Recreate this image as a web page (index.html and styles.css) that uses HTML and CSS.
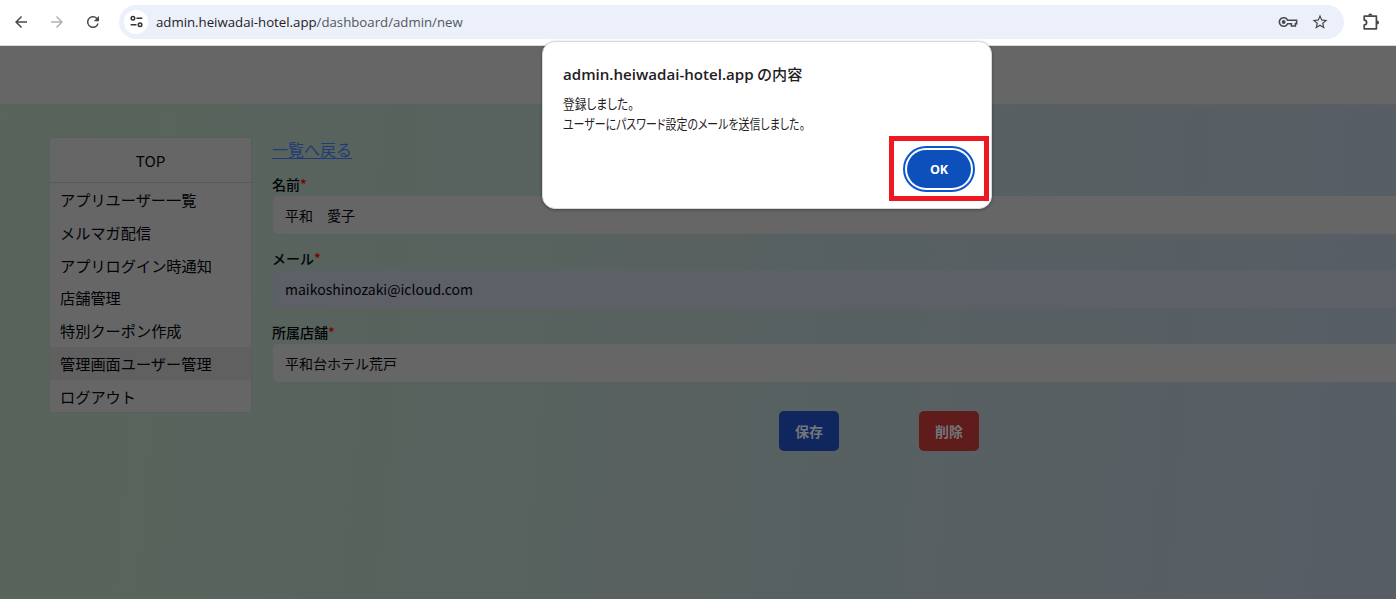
FILE: index.html
```html
<!DOCTYPE html>
<html lang="ja">
<head>
<meta charset="utf-8">
<title>管理画面ユーザー管理</title>
<link rel="stylesheet" href="styles.css">
</head>
<body>
<div class="window">
  <header class="toolbar">
    <svg class="nav-icon" viewBox="0 0 24 24"><path d="M20 11H7.8l5.6-5.6L12 4l-8 8 8 8 1.4-1.4L7.8 13H20z"/></svg>
    <svg class="nav-icon disabled" viewBox="0 0 24 24"><path d="M4 11h12.2l-5.6-5.6L12 4l8 8-8 8-1.4-1.4 5.6-5.6H4z"/></svg>
    <svg class="nav-icon" viewBox="0 0 24 24"><path d="M17.65 6.35A8 8 0 1 0 19.73 14h-2.08A6 6 0 1 1 12 6c1.66 0 3.14.69 4.22 1.78L13 11h7V4z"/></svg>
    <div class="address">
      <span class="site-info">
        <svg viewBox="0 0 16 16"><g fill="none" stroke="#303236" stroke-width="1.6"><circle cx="4.2" cy="4.6" r="1.9"/><path d="M8 4.6h6.2M1.8 11.4H8"/><circle cx="11.8" cy="11.4" r="1.9"/></g></svg>
      </span>
      <span class="url">admin.heiwadai-hotel.app<span class="path">/dashboard/admin/new</span></span>
      <svg class="key-icon" viewBox="0 0 20 12"><g fill="none" stroke="#47494d" stroke-width="1.6"><path d="M9.6 4.3A4.3 4.3 0 1 0 9.6 7.7H13.4V10h4V7.7h1.2V4.3z"/></g><circle cx="5.7" cy="6" r="1.9" fill="#47494d"/></svg>
      <svg class="star-icon" viewBox="0 0 24 24"><path d="M22 9.24l-7.19-.62L12 2 9.19 8.63 2 9.24l5.46 4.73L5.82 21 12 17.27 18.18 21l-1.63-7.03zM12 15.4l-3.76 2.27 1-4.28-3.32-2.88 4.38-.38L12 6.1l1.71 4.04 4.38.38-3.32 2.88 1 4.28z"/></svg>
    </div>
    <svg class="extension-icon" viewBox="0 0 18 18"><path d="M2.2 3.2h12.2v12.6H2.2v-3.9a2.4 2.4 0 0 0 0-4.8z" fill="none" stroke="#47494d" stroke-width="1.7" stroke-linejoin="round"/><path d="M6.2 2.6a2.1 2.1 0 0 1 4.2 0zM15 7.4a2.1 2.1 0 0 1 0 4.2z" fill="#47494d"/></svg>
  </header>
  <div class="page">
    <div class="banner"></div>
    <div class="content">
      <nav class="sidebar">
        <div class="sidebar-title">TOP</div>
        <a class="item">アプリユーザー一覧</a>
        <a class="item">メルマガ配信</a>
        <a class="item">アプリログイン時通知</a>
        <a class="item">店舗管理</a>
        <a class="item">特別クーポン作成</a>
        <a class="item active">管理画面ユーザー管理</a>
        <a class="item">ログアウト</a>
      </nav>
      <main class="form">
        <a class="back">一覧へ戻る</a>
        <div class="label">名前<span class="required">*</span></div>
        <div class="field">平和　愛子</div>
        <div class="label">メール<span class="required">*</span></div>
        <div class="field autofill">maikoshinozaki@icloud.com</div>
        <div class="label">所属店舗<span class="required">*</span></div>
        <div class="field">平和台ホテル荒戸</div>
        <div class="actions"><span class="button save">保存</span><span class="button delete">削除</span></div>
      </main>
    </div>
  </div>
  <section class="dialog">
    <h1 class="dialog-title"><span class="dialog-host">admin.heiwadai-hotel.app</span> の内容</h1>
    <svg class="message" viewBox="0 0 260 46">
      <text x="0" y="15.5" textLength="71" lengthAdjust="spacingAndGlyphs">登録しました。</text>
      <text x="0" y="35.5" textLength="242" lengthAdjust="spacingAndGlyphs">ユーザーにパスワード設定のメールを送信しました。</text>
    </svg>
    <div class="highlight"><span class="ok">OK</span></div>
  </section>
</div>
</body>
</html>
```

FILE: styles.css
```css
* { box-sizing: border-box; }
body { margin: 0; overflow: hidden; font-family: "Noto Sans CJK JP", sans-serif; }
.window { position: relative; width: 1396px; height: 599px; overflow: hidden; }
.toolbar { display: flex; align-items: center; height: 46px; padding: 0 0 2px 12px; background: #fff; border-bottom: 1px solid #d9dadb; }
.nav-icon { width: 18px; height: 18px; margin-right: 18px; fill: #47494d; flex: none; }
.nav-icon.disabled { fill: #b0b1b3; }
.nav-icon:nth-of-type(3) { margin-right: 17px; }
.address { display: flex; align-items: center; width: 1225px; height: 34px; padding: 0 15px 0 5px; border-radius: 17px; background: #ebf0fa; }
.site-info { display: grid; place-items: center; width: 24px; height: 24px; border-radius: 50%; background: #fff; }
.site-info svg { width: 15px; height: 15px; }
.url { margin-left: 8px; font: 13.23px/20px "Open Sans", sans-serif; color: #1f2023; white-space: nowrap; }
.path { color: #54575b; }
.key-icon { width: 20px; height: 12px; margin-left: auto; margin-right: 13px; }
.star-icon { width: 18px; height: 18px; fill: #47494d; }
.extension-icon { width: 18px; height: 18px; margin-left: 18px; flex: none; }
.page { height: 553px; background: linear-gradient(95deg, #59645b 0%, #58645c 12%, #586160 50%, #575f63 78%, #575d65 100%); }
.banner { height: 59px; background: #666; border-bottom: 1px solid #5d605f; }
.content { display: flex; gap: 21px; padding: 33px 0 0 50px; }
.sidebar { width: 201px; height: 274px; flex: none; background: #666; box-shadow: 0 0 1px #514f53; font-size: 15.2px; color: #020306; }
.sidebar-title { height: 45px; line-height: 45px; border-bottom: 1px solid #575859; text-align: center; }
.item { display: block; height: 32.8px; padding-left: 10px; line-height: 32px; white-space: nowrap; }
.item.active { background: #606060; }
.form { width: 1200px; flex: none; color: #020306; }
.back { display: block; width: max-content; height: 24px; line-height: 22px; font-size: 16px; color: #203b75; text-decoration: underline; text-underline-offset: 2px; }
.label { height: 20px; margin-top: 12px; line-height: 20px; font-size: 14px; font-weight: 500; }
.field + .label { margin-top: 14px; }
.required { color: #7d0000; }
.field { height: 38px; margin: 2px 0 0 1px; padding-left: 12px; border-radius: 5px; background: #666; line-height: 38px; font-size: 14px; }
.autofill { background: #5d6066; }
.actions { display: flex; gap: 80px; margin: 29px 0 0 507px; }
.button { width: 60px; height: 40px; border-radius: 5px; line-height: 41px; text-align: center; font-size: 14px; font-weight: 700; color: #73757b; }
.save { background: #0f275e; }
.delete { background: #601b1b; }
.dialog { position: absolute; left: 542px; top: 41px; width: 450px; height: 168px; padding: 20px 0 0 20px; border: 1px solid #d8d9da; border-radius: 13px; background: #fff; box-shadow: 0 1px 3px #0005; color: #1f2023; }
.dialog-title { margin: 0; font-size: 15.1px; line-height: 22px; font-weight: 500; white-space: nowrap; }
.dialog-host { font-family: "Open Sans", sans-serif; font-weight: 600; }
.message { display: block; width: 260px; height: 46px; margin-top: 8px; overflow: visible; font-size: 13.3px; font-feature-settings: "palt"; fill: #1f2023; }
.highlight { position: absolute; left: 346px; top: 94px; width: 100px; height: 65px; display: grid; place-items: center; border: 5px solid #ed1822; }
.ok { width: 64px; height: 38px; border-radius: 19px; outline: 2px solid #0b57d0; outline-offset: 2px; background: #0d50bb; color: #fff; font: 700 12.5px/39px "Open Sans", sans-serif; text-align: center; }
```
